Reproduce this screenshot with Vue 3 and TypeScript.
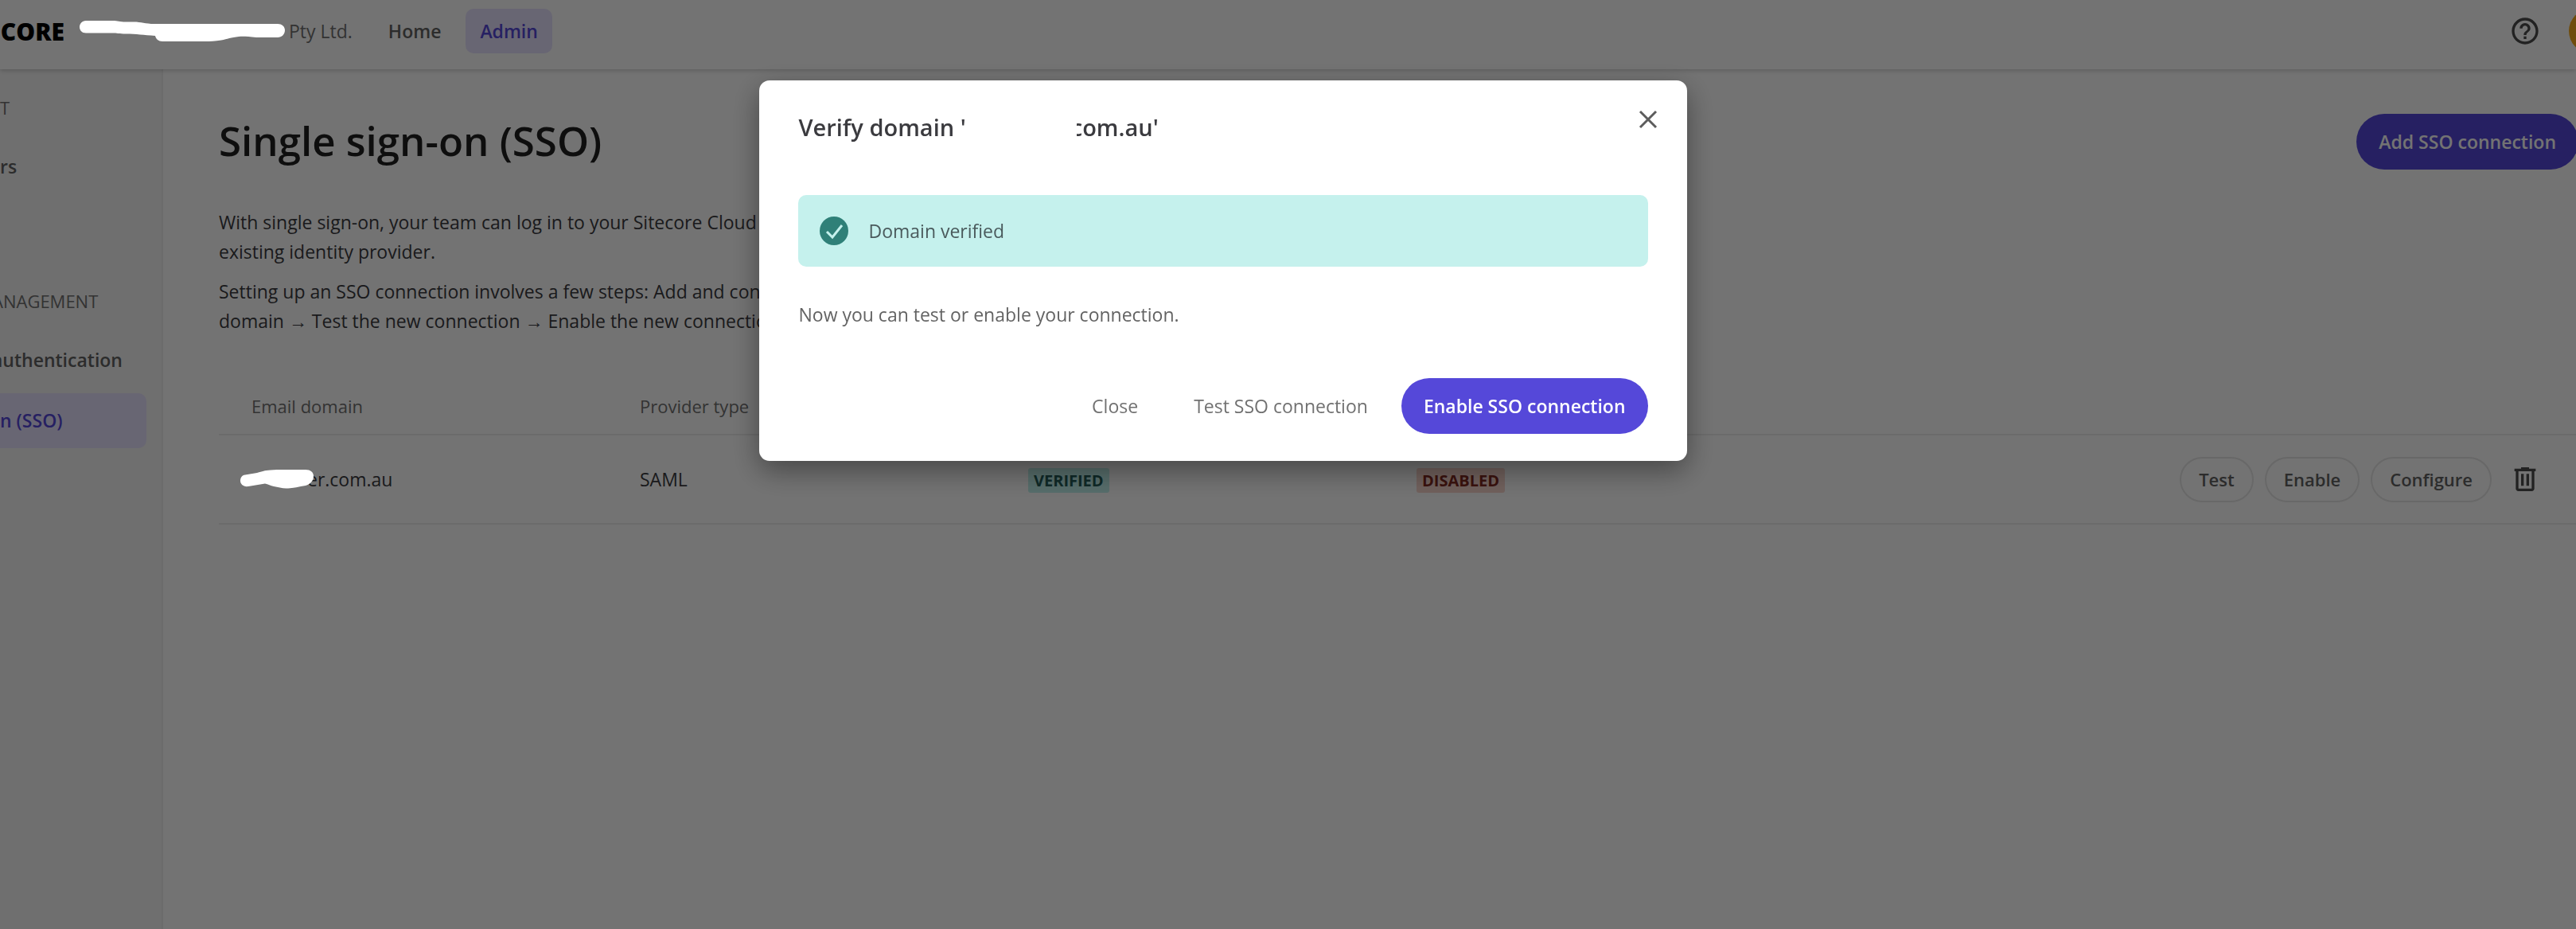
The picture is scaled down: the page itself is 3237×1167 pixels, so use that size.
<script setup lang="ts">
import { ref } from 'vue'

interface Connection {
  domain: string
  provider: string
  verification: string
  status: string
}

interface NavItem {
  label: string
  active?: boolean
  cut?: boolean
}

interface NavGroup {
  heading: string
  cut?: boolean
  items: NavItem[]
}

const groups: NavGroup[] = [
  { heading: 'T', items: [{ label: 'rs' }] },
  {
    heading: 'ANAGEMENT',
    cut: true,
    items: [
      { label: 'authentication', cut: true },
      { label: 'n (SSO)', active: true },
    ],
  },
]

const connections: Connection[] = [
  { domain: 'er.com.au', provider: 'SAML', verification: 'VERIFIED', status: 'DISABLED' },
]

const actions: string[] = ['Test', 'Enable', 'Configure']
const dialogOpen = ref(true)
</script>

<template>
  <div class="app">
    <header class="topbar">
      <a class="brand" href="#">CORE</a>
      <div class="company">
        <svg class="redaction company-mark" width="260" height="28" viewBox="99 30 260 28" aria-hidden="true">
          <path
            d="M108 31H142C148 31 150 32.500 158 32.500H168C178 32.500 182 35 194 35H349C354 35 358 38 358 43C358 48 354 52 349 52H322C312 51 306 50.500 300 51C290 52 286 54 278 55.500C270 57 264 57 258 57H204C199 57 196 54 195 50C180 49 172 47.500 158 47.500C150 47.500 146 46.500 142 46.500H108C103 46.500 100 43 100 39C100 35 103 31 108 31Z"
          />
        </svg>
        <span>Pty Ltd.</span>
      </div>
      <nav class="topnav" aria-label="Primary">
        <a class="toplink" href="#">Home</a>
        <a class="toplink active" href="#">Admin</a>
      </nav>
      <div class="tools">
        <button class="icon-btn" type="button" aria-label="Help">
          <svg width="40" height="40" viewBox="0 0 24 24" fill="currentColor">
            <path
              d="M11 18h2v-2h-2v2zm1-16C6.480 2 2 6.480 2 12s4.480 10 10 10 10-4.480 10-10S17.520 2 12 2zm0 18c-4.410 0-8-3.590-8-8s3.590-8 8-8 8 3.590 8 8-3.590 8-8 8zm0-14c-2.210 0-4 1.790-4 4h2c0-1.100.9-2 2-2s2 .9 2 2c0 2-3 1.750-3 5h2c0-2.250 3-2.500 3-5 0-2.210-1.790-4-4-4z"
            />
          </svg>
        </button>
        <button class="avatar" type="button" aria-label="Account"></button>
      </div>
    </header>

    <div class="body">
      <aside class="sidebar">
        <nav v-for="group in groups" :key="group.heading" class="group" :aria-label="group.heading">
          <h2 class="group-title" :class="{ cut: group.cut }">{{ group.heading }}</h2>
          <a
            v-for="item in group.items"
            :key="item.label"
            href="#"
            class="side-link"
            :class="{ active: item.active, cut: item.cut }"
            >{{ item.label }}</a
          >
        </nav>
      </aside>

      <main class="main">
        <div class="title-row">
          <h1 class="title">Single sign-on (SSO)</h1>
          <button class="primary" type="button">Add SSO connection</button>
        </div>
        <div class="intro">
          <p>
            With single sign-on, your team can log in to your Sitecore Cloud<br />existing identity
            provider.
          </p>
          <p>
            Setting up an SSO connection involves a few steps: Add and con<br />domain
            <span class="arrow">→</span> Test the new connection <span class="arrow">→</span> Enable
            the new connection
          </p>
        </div>

        <table class="table">
          <thead>
            <tr>
              <th class="data">Email domain</th>
              <th class="data">Provider type</th>
              <th class="data"></th>
              <th class="data"></th>
              <th></th>
            </tr>
          </thead>
          <tbody>
            <tr v-for="row in connections" :key="row.domain">
              <td>
                <span class="domain">
                  <svg class="redaction domain-mark" width="94" height="26" viewBox="301 592 94 26" aria-hidden="true">
                    <path
                      d="M308 599.500L323 597C330 595 332 594 340 593.500C346 593 350 593 356 593H384C390 593 394 596 394 601C394 607 390 611 384 613C376 614.500 368 616 362 616.500C355 617 350 615 344 614C340 613 337 611.500 333 610.500L312 614C306 615 302 611 302 607C302 603 304 600 308 599.500Z"
                    />
                  </svg>
                  {{ row.domain }}
                </span>
              </td>
              <td>{{ row.provider }}</td>
              <td><span class="badge verified">{{ row.verification }}</span></td>
              <td><span class="badge disabled">{{ row.status }}</span></td>
              <td class="actions-cell">
                <div class="actions">
                  <button v-for="action in actions" :key="action" class="outline" type="button">
                    {{ action }}
                  </button>
                  <button class="icon-btn" type="button" aria-label="Delete">
                    <svg width="40" height="40" viewBox="0 0 24 24" fill="currentColor">
                      <path
                        d="M9 3v1H4v2h1v13c0 1.100.9 2 2 2h10c1.100 0 2-.9 2-2V6h1V4h-5V3H9zM7 6h10v13H7V6zm2 2v9h2V8H9zm4 0v9h2V8h-2z"
                      />
                    </svg>
                  </button>
                </div>
              </td>
            </tr>
          </tbody>
        </table>
      </main>
    </div>

    <div v-if="dialogOpen" class="overlay">
      <section class="dialog" role="dialog" aria-modal="true" aria-labelledby="dialog-title">
        <header class="dialog-head">
          <h2 id="dialog-title" class="dialog-title">
            <span>Verify domain '</span><span class="blank"></span><span>com.au'</span>
          </h2>
          <button class="close" type="button" aria-label="Close dialog" @click="dialogOpen = false">
            <svg width="24" height="24" viewBox="0 0 24 24" fill="none" stroke="currentColor" stroke-width="3">
              <path d="M2 2L22 22M22 2L2 22" />
            </svg>
          </button>
        </header>
        <div class="alert" role="status">
          <svg width="36" height="36" viewBox="0 0 36 36" aria-hidden="true">
            <circle cx="18" cy="18" r="18" fill="#2f8078" />
            <path d="M9 19L16 26L28 11" fill="none" stroke="#c5f1ed" stroke-width="3" />
          </svg>
          <span>Domain verified</span>
        </div>
        <p class="note">Now you can test or enable your connection.</p>
        <footer class="dialog-foot">
          <button class="ghost" type="button" @click="dialogOpen = false">Close</button>
          <button class="ghost" type="button">Test SSO connection</button>
          <button class="primary" type="button">Enable SSO connection</button>
        </footer>
      </section>
    </div>
  </div>
</template>

<style>
body {
  margin: 0;
  background: #fff;
}
</style>

<style scoped>
.app {
  display: flex;
  flex-direction: column;
  min-height: 100vh;
  overflow: hidden;
  font-family: 'Open Sans', 'Noto Sans', sans-serif;
  font-size: 23px;
  line-height: 37px;
  color: #3b3b3f;
}

h1,
h2,
p {
  margin: 0;
}

a {
  color: inherit;
  text-decoration: none;
}

button {
  flex: none;
  box-sizing: border-box;
  padding: 0;
  border: 0;
  background: none;
  color: inherit;
  font: inherit;
  white-space: nowrap;
  cursor: pointer;
}

svg {
  display: block;
}

.topbar {
  position: relative;
  display: flex;
  align-items: center;
  box-sizing: border-box;
  height: 87px;
  padding-bottom: 9px;
  background: #fff;
  box-shadow: 0 1px 6px rgba(0, 0, 0, 0.24);
}

.brand {
  display: flex;
  justify-content: flex-end;
  width: 81px;
  color: #000;
  font-size: 30px;
  font-weight: 800;
}

.company {
  display: flex;
  align-items: center;
  gap: 4px;
  margin-left: 18px;
  color: #717171;
}

.redaction {
  position: relative;
  z-index: 30;
  fill: #fff;
}

.topnav {
  display: flex;
  gap: 13px;
  margin-left: 27px;
}

.toplink {
  padding: 0 18px;
  border-radius: 10px;
  font-weight: 600;
  line-height: 56px;
  color: #636363;
}

.toplink.active {
  background: #e7e2ff;
  color: #5548d9;
}

.tools {
  display: flex;
  align-items: center;
  gap: 27px;
  margin-left: auto;
  margin-right: -47px;
}

.icon-btn {
  display: flex;
  align-items: center;
  justify-content: center;
  width: 56px;
  height: 56px;
  color: #4c4c4c;
}

.avatar {
  width: 56px;
  height: 56px;
  border-radius: 50%;
  background: #f5a81c;
}

.body {
  display: flex;
  flex: 1;
}

.sidebar {
  flex: none;
  box-sizing: border-box;
  width: 205px;
  padding: 28px 19px 0 0;
  border-right: 2px solid #eeeeee;
  background: #f6f6f6;
  overflow: hidden;
}

.group {
  display: flex;
  flex-direction: column;
  gap: 7px;
  margin-bottom: 114px;
}

.group-title {
  margin-bottom: 13px;
  font-size: 22px;
  font-weight: 400;
  line-height: 40px;
  color: #717171;
}

.side-link {
  border-radius: 0 10px 10px 0;
  font-weight: 600;
  line-height: 69px;
  color: #636363;
}

.side-link.active {
  background: #e7e2ff;
  color: #5548d9;
}

/* Labels that run past the left edge of the window. */
.cut {
  margin-left: -10px;
}

.main {
  flex: 1;
  min-width: 0;
  margin-right: -3px;
  padding: 56px 0 0 70px;
}

.title-row {
  display: flex;
  align-items: flex-start;
  justify-content: space-between;
  margin-bottom: 48px;
}

.title {
  font-size: 51px;
  font-weight: 600;
  line-height: 66px;
  color: #1f1f1f;
}

.primary {
  height: 70px;
  padding: 0 28px;
  border-radius: 35px;
  background: #5548d9;
  color: #fff;
  font-weight: 600;
}

.intro {
  display: flex;
  flex-direction: column;
  gap: 13px;
  margin-bottom: 52px;
  white-space: nowrap;
}

.arrow {
  font-family: 'Liberation Sans', sans-serif;
}

.table {
  width: 100%;
  table-layout: fixed;
  border-collapse: collapse;
}

.table th,
.table td {
  box-sizing: border-box;
  padding: 0 0 0 41px;
  border-bottom: 2px solid #eeeeee;
  text-align: left;
  vertical-align: middle;
}

.table th {
  height: 71px;
  font-size: 22px;
  font-weight: 500;
  color: #717171;
}

.table td {
  height: 112px;
}

.table .data {
  width: 488px;
}

.table .actions-cell {
  padding-right: 39px;
}

.domain {
  display: flex;
  align-items: center;
  margin-left: -15px;
}

.domain-mark {
  flex: none;
  margin-right: -9px;
}

.badge {
  display: inline-block;
  padding: 0 7px;
  border-radius: 3px;
  font-size: 20px;
  font-weight: 700;
  line-height: 31px;
}

.badge.verified {
  background: #c0f1ec;
  color: #235c58;
}

.badge.disabled {
  background: #f8d5cc;
  color: #80291f;
}

.actions {
  display: flex;
  align-items: center;
  justify-content: flex-end;
  gap: 14px;
}

.outline {
  height: 57px;
  padding: 0 22px;
  border: 2px solid #e6e6e6;
  border-radius: 29px;
  font-size: 22px;
  font-weight: 600;
  color: #636363;
}

.overlay {
  position: fixed;
  inset: 0;
  z-index: 20;
  display: flex;
  align-items: flex-start;
  justify-content: center;
  padding: 101px 163px 0 0;
  background: rgba(0, 0, 0, 0.55);
}

.dialog {
  box-sizing: border-box;
  width: 37.9%;
  padding: 34px 49px;
  border-radius: 13px;
  background: #fff;
  box-shadow: 0 12px 36px rgba(0, 0, 0, 0.4);
}

.dialog-head {
  display: flex;
  align-items: flex-start;
  justify-content: space-between;
  margin-bottom: 60px;
}

.dialog-title {
  display: flex;
  font-size: 29px;
  font-weight: 600;
  line-height: 50px;
  white-space: pre;
}

.blank {
  position: relative;
  width: 140px;
  margin: 0 -7px 0 -1px;
  background: #fff;
}

.close {
  display: flex;
  align-items: center;
  height: 30px;
  margin-right: -12px;
  color: #5c5c5c;
}

.alert {
  display: flex;
  align-items: center;
  gap: 25px;
  height: 90px;
  margin-bottom: 42px;
  padding-left: 27px;
  border-radius: 10px;
  background: #c5f1ed;
  color: #4a5a5c;
}

.note {
  margin-bottom: 61px;
  color: #636363;
}

.dialog-foot {
  display: flex;
  justify-content: flex-end;
  gap: 14px;
}

.ghost {
  height: 70px;
  padding: 0 28px;
  font-weight: 500;
  color: #717171;
}
</style>
